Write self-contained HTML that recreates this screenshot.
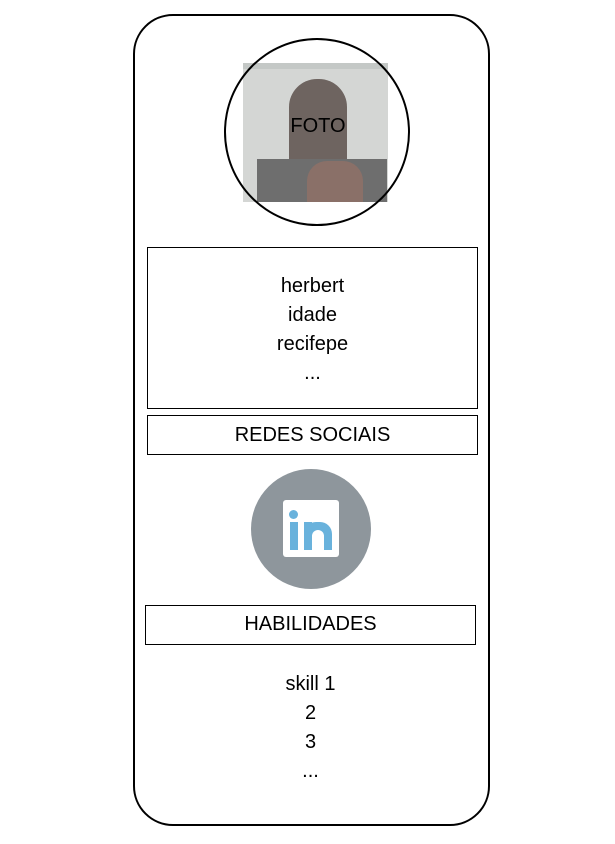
<!DOCTYPE html>
<html><head><style>
body{margin:0;width:615px;height:844px;background:#fff;position:relative;font-family:"Liberation Sans",sans-serif;color:#000;overflow:hidden}
.a{position:absolute}
.card{left:133px;top:14px;width:353px;height:808px;border:2px solid #000;border-radius:40px}
.box{border:1px solid #000;box-sizing:border-box}
.t{text-align:center;font-size:20px;line-height:29px}
</style></head><body>
<div class="a card"></div>
<div class="a" style="left:243px;top:63px;width:145px;height:139px;background:#d4d6d4;overflow:hidden">
 <div class="a" style="left:0;top:0;width:145px;height:6px;background:#c4c8c6"></div>
 <div class="a" style="left:46px;top:16px;width:58px;height:108px;background:#6e6460;border-radius:28px 28px 20px 20px"></div>
 <div class="a" style="left:14px;top:96px;width:130px;height:43px;background:#6e6e6e"></div>
 <div class="a" style="left:64px;top:98px;width:56px;height:41px;background:#8a7068;border-radius:20px 20px 0 0"></div>
</div>
<div class="a" style="left:224px;top:38px;width:182px;height:184px;border:2px solid #000;border-radius:50%;box-sizing:content-box"></div>
<div class="a t" style="left:243px;top:112px;width:150px">FOTO</div>
<div class="a box" style="left:147px;top:247px;width:331px;height:162px"></div>
<div class="a t" style="left:147px;top:272px;width:331px">herbert<br>idade<br>recifepe<br>...</div>
<div class="a box t" style="left:147px;top:415px;width:331px;height:40px;line-height:38px">REDES SOCIAIS</div>
<div class="a" style="left:251px;top:469px;width:120px;height:120px;border-radius:50%;background:#8e969c"></div>
<div class="a" style="left:283px;top:500px;width:56px;height:57px;background:#fff;border-radius:3px"></div>
<div class="a" style="left:289px;top:510px;width:9px;height:9px;border-radius:50%;background:#69b2dc"></div>
<div class="a" style="left:290px;top:522px;width:8px;height:28px;background:#69b2dc"></div>
<div class="a" style="left:304px;top:522px;width:8px;height:28px;background:#69b2dc"></div>
<div class="a" style="left:304px;top:522px;width:28px;height:28px;background:#69b2dc;border-radius:12px 12px 0 0"></div>
<div class="a" style="left:312px;top:530px;width:12px;height:20px;background:#fff;border-radius:6px 6px 0 0"></div>
<div class="a box t" style="left:145px;top:605px;width:331px;height:40px;line-height:36px">HABILIDADES</div>
<div class="a t" style="left:145px;top:670px;width:331px">skill 1<br>2<br>3<br>...</div>
</body></html>
